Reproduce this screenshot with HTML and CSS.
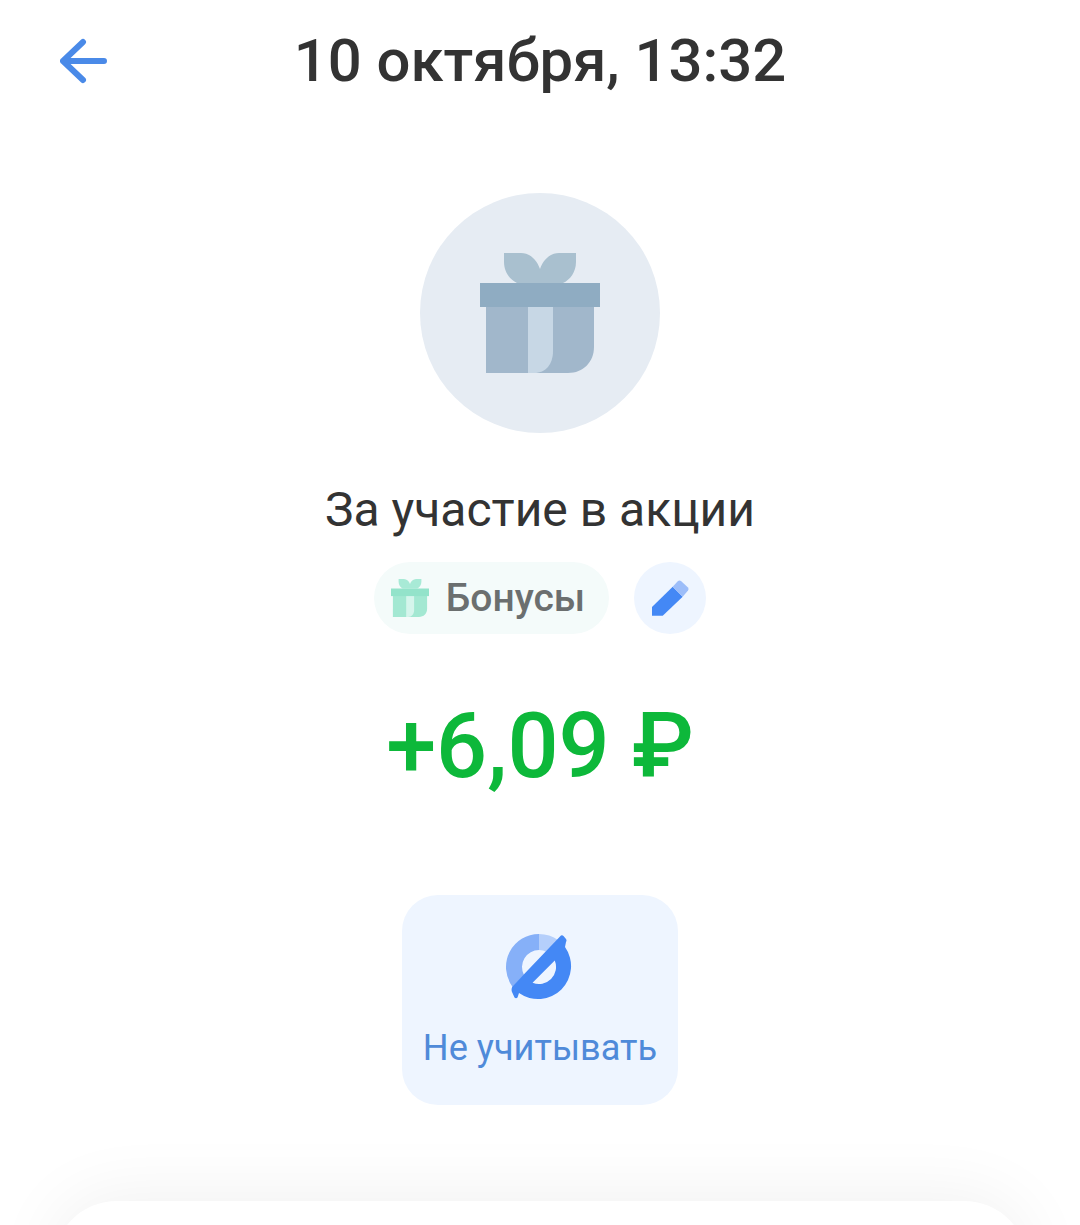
FILE: index.html
```html
<!DOCTYPE html>
<html lang="en">
<head>
<meta charset="UTF-8">
<meta name="viewport" content="width=device-width, initial-scale=1.0">
<title>Операция</title>
<link rel="stylesheet" href="styles.css">
</head>
<body>
<svg class="sprites" width="0" height="0">
  <symbol id="gift" viewBox="0 0 120 120">
    <path class="gift-bow" d="M24 0H41C50 0 57 7 60 16C63 7 70 0 79 0H96V9C96 19 90 27 83 30H37C30 27 24 19 24 9Z"/>
    <path class="gift-body" d="M6 54H114V94C114 109 103 120 88 120H6Z"/>
    <path class="gift-ribbon" d="M48 54H73V98C73 111 66 120 54 120H48Z"/>
    <rect class="gift-lid" x="0" y="30" width="120" height="24"/>
  </symbol>
</svg>

<header class="top">
  <a class="back" href="#">
    <svg width="50" height="50" viewBox="0 0 50 50" fill="none" stroke="#4a8ae8" stroke-width="6" stroke-linecap="round" stroke-linejoin="round">
      <path d="M3 25H44M23 6L3 25L23 44"/>
    </svg>
  </a>
  <h1>10 октября, 13:32</h1>
</header>

<main class="details">
  <div class="big-icon">
    <svg class="gift-big" width="120" height="120"><use href="#gift"/></svg>
  </div>
  <p class="title">За участие в акции</p>
  <div class="tags">
    <div class="chip">
      <svg class="gift-small" width="38" height="38"><use href="#gift"/></svg>
      <span>Бонусы</span>
    </div>
    <button class="edit">
      <svg width="40" height="40" viewBox="1 0 40 40">
        <path fill="#4488f5" d="M3 29L23.7 8.7L33.7 18.7L13.7 37.7H3Z"/>
        <path fill="#9cbdf9" d="M23.7 8.7L29 3Q30.5 1.8 32 3L39 9.5Q40.2 11 39 12.5L33.7 18.7Z"/>
      </svg>
    </button>
  </div>
  <div class="amount">+6,09 ₽</div>
  <button class="ignore">
    <svg width="80" height="80" viewBox="1 0 80 80">
      <path fill="#86b0f8" d="M40 7A33 33 0 0 0 13.3 59.4L24.9 47.8A17 17 0 0 1 40 23Z"/>
      <path fill="#b5cffb" d="M40 7A33 33 0 0 1 59.4 13.3L47.8 24.9A17 17 0 0 0 40 23Z"/>
      <path fill="#4488f5" fill-rule="evenodd" d="M61 9.5Q62.7 7.5 64.5 9L67 12Q68 13.5 67 15L66 20A33 33 0 0 1 20 66L18.5 70.5Q17 72 15.5 70.5L13 65Q12 62.5 13.3 59.4ZM55.75 33.55A17 17 0 0 1 33.55 55.75Z"/>
    </svg>
    <span>Не учитывать</span>
  </button>
</main>

<section class="sheet"></section>
</body>
</html>
```

FILE: styles.css
```css
html, body {
    height: 100%;
}
body {
    margin: 0;
    height: 100vh;
    overflow: hidden;
    background-color: #fff;
    font-family: Roboto, "Noto Sans", sans-serif;
    color: #333;
}
.sprites {
    position: absolute;
}
.top {
    display: grid;
    grid-template-columns: 1fr auto 1fr;
    align-items: center;
    height: 122px;
    padding: 0 60px;
    box-sizing: border-box;
}
.top h1 {
    grid-column: 2;
    grid-row: 1;
    margin: 0;
    font-size: 59.8px;
    font-weight: 500;
    line-height: 122px;
}
.back {
    grid-column: 1;
    grid-row: 1;
    display: flex;
}
.details {
    display: flex;
    flex-direction: column;
    align-items: center;
    padding-top: 71px;
}
.big-icon {
    width: 240px;
    height: 240px;
    border-radius: 50%;
    background-color: #e6ecf3;
    display: flex;
    align-items: center;
    justify-content: center;
}
.gift-big {
    --bow: #a9c0cf;
    --body: #a1b7cb;
    --ribbon: #c7d7e5;
    --lid: #8facc2;
}
.gift-small {
    --bow: #a8ead6;
    --body: #a3e8d2;
    --ribbon: #d5f5ec;
    --lid: #93e3ca;
}
.gift-bow { fill: var(--bow); }
.gift-body { fill: var(--body); }
.gift-ribbon { fill: var(--ribbon); }
.gift-lid { fill: var(--lid); }
.title {
    margin: 47px 0 0;
    font-size: 48px;
    line-height: 60px;
}
.tags {
    display: flex;
    align-items: center;
    gap: 25px;
    margin-top: 22px;
}
.chip {
    display: flex;
    align-items: center;
    gap: 17px;
    height: 72px;
    padding: 0 24px 0 17px;
    border-radius: 36px;
    background-color: #f4fbfa;
    color: #6b6f6f;
    font-size: 39px;
    font-weight: 500;
}
.edit {
    width: 72px;
    height: 72px;
    padding: 0;
    border: none;
    border-radius: 50%;
    background-color: #eef5ff;
    display: flex;
    align-items: center;
    justify-content: center;
}
.amount {
    margin-top: 58px;
    font-size: 90px;
    font-weight: 500;
    line-height: 110px;
    color: #0db83a;
}
.ignore {
    margin-top: 93px;
    width: 276px;
    height: 210px;
    padding: 32px 0 0;
    border: none;
    border-radius: 36px;
    background-color: #eef5ff;
    color: #4f8ad9;
    font-family: inherit;
    font-size: 36.2px;
    display: flex;
    flex-direction: column;
    align-items: center;
    box-sizing: border-box;
}
.ignore span {
    margin-top: 20px;
    line-height: 42px;
}
.sheet {
    margin: 96px 52px 0 53px;
    height: 100px;
    border-radius: 64px 64px 0 0;
    background-color: #fff;
    box-shadow: 0 -6px 70px rgba(0, 0, 0, 0.06);
}
```
